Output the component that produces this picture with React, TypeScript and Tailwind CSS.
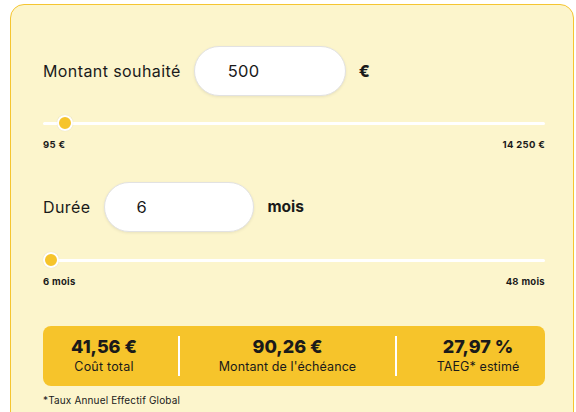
import React from "react";

const font = { fontFamily: "Inter, 'Noto Sans', sans-serif" };

const Slider: React.FC<{ frac: number; min: string; max: string }> = ({ frac, min, max }) => {
  return (
    <div>
      <div className="relative h-4 flex items-center">
        <div className="w-full h-[3px] bg-white rounded-full" />
        <div
          className="absolute top-0 w-4 h-4 rounded-full bg-[#f6c42b] border-2 border-white shadow-[0_0_1px_rgba(0,0,0,0.15)]"
          style={{ left: `calc(${frac} * (100% - 16px))` }}
        />
      </div>
      <div className="mt-[8px] flex justify-between text-[9.5px] leading-[12px] font-bold tracking-[0.3px] text-[#1a1a1a]">
        <span>{min}</span>
        <span>{max}</span>
      </div>
    </div>
  );
};

export default function App() {
  return (
    <div className="w-[576px] h-[412px] overflow-hidden bg-white" style={font}>
      <div className="ml-[10px] mr-[2px] mt-[4px] h-[440px] rounded-[14px] border border-[#f5c531] bg-[#fcf5cc] pl-[32px] pr-[28px] pt-[41px] text-[#1a1a1a]">
        {/* Montant */}
        <div className="flex items-center h-[50px]">
          <span className="text-[16px] tracking-[0.4px]">Montant souhaité</span>
          <div className="ml-[13px] w-[152px] h-[50px] rounded-full bg-white border border-[#e2e2e2] shadow-[0_1px_3px_rgba(0,0,0,0.08)] flex items-center pl-[33px] text-[16.5px] tracking-[0.4px]">
            500
          </div>
          <span className="ml-[13px] text-[16px] font-extrabold">€</span>
        </div>
        <div className="mt-[19px]">
          <Slider frac={(500 - 95) / (14250 - 95)} min="95 €" max="14 250 €" />
        </div>

        {/* Durée */}
        <div className="mt-[31px] flex items-center h-[50px]">
          <span className="text-[16px] tracking-[0.4px]">Durée</span>
          <div className="ml-[14px] w-[150px] h-[50px] rounded-full bg-white border border-[#e2e2e2] shadow-[0_1px_3px_rgba(0,0,0,0.08)] flex items-center pl-[31px] text-[16.5px]">
            6
          </div>
          <span className="ml-[13px] text-[15.5px] font-bold">mois</span>
        </div>
        <div className="mt-[20px]">
          <Slider frac={0} min="6 mois" max="48 mois" />
        </div>

        {/* Résultats */}
        <div className="mt-[38px] h-[60px] rounded-[8px] bg-[#f6c42b] flex items-center">
          <div className="w-[135px] pr-[13px] flex flex-col items-center">
            <span className="text-[18px] leading-[22px] font-extrabold">41,56 €</span>
            <span className="text-[12.5px] leading-[18px] tracking-[0.2px]">Coût total</span>
          </div>
          <div className="w-[2px] h-[40px] bg-white" />
          <div className="w-[215px] flex flex-col items-center">
            <span className="text-[18px] leading-[22px] font-extrabold">90,26 €</span>
            <span className="text-[12.5px] leading-[18px] tracking-[0.1px]">Montant de l'échéance</span>
          </div>
          <div className="w-[2px] h-[40px] bg-white" />
          <div className="flex-1 pl-[14px] flex flex-col items-center">
            <span className="text-[18px] leading-[22px] font-extrabold">27,97 %</span>
            <span className="text-[12.5px] leading-[18px] tracking-[0.1px]">TAEG* estimé</span>
          </div>
        </div>
        <div className="mt-[8px] text-[10px] leading-[12px] tracking-[0.15px]">*Taux Annuel Effectif Global</div>
      </div>
    </div>
  );
}
